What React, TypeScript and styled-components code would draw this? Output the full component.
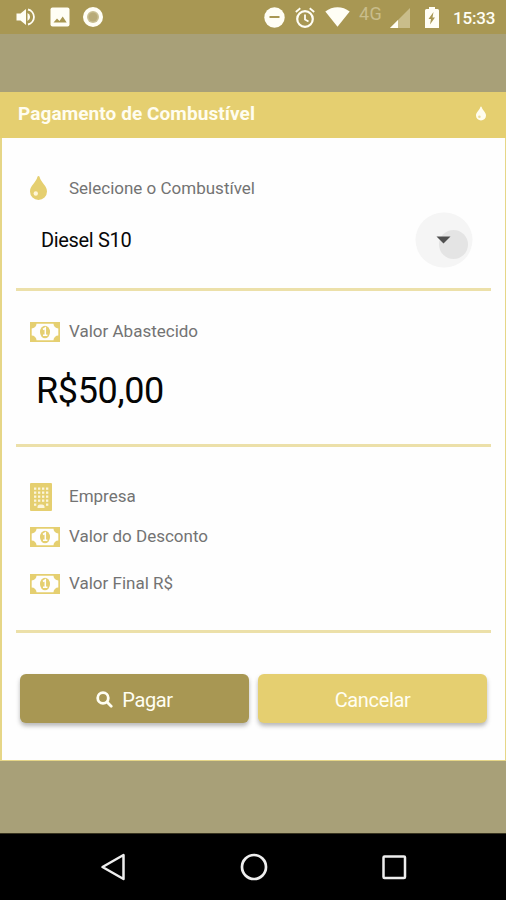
import React from "react";
import styled, { createGlobalStyle } from "styled-components";

const GlobalStyle = createGlobalStyle`
  * { box-sizing: border-box; }
  body { margin: 0; background: #a8a078; font-family: Roboto, "Liberation Sans", sans-serif; }
  svg { display: block; flex: none; }
`;

const gold = "#e5cf70";
const olive = "#a89753";

const Screen = styled.div`
  width: 506px;
  height: 900px;
  display: flex;
  flex-direction: column;
  background: #a8a078;
  overflow: hidden;
`;

const StatusBar = styled.header`
  height: 34px;
  flex: none;
  display: flex;
  align-items: center;
  justify-content: space-between;
  padding: 0 10px 0 16px;
  background: ${olive};
  color: #fffef5;
`;

const StatusGroup = styled.div`
  display: flex;
  align-items: center;
`;

const Gap = styled.span<{ $w: number }>`
  flex: none;
  width: ${(p) => p.$w}px;
`;

const Network = styled.span`
  width: 25px;
  height: 26px;
  font-size: 18px;
  line-height: 19px;
  letter-spacing: 0.5px;
  color: #c9bd8b;
`;

const Clock = styled.span`
  width: 43px;
  font-size: 17px;
  line-height: 34px;
  font-weight: 500;
  letter-spacing: -0.2px;
  white-space: nowrap;
  padding-top: 2px;
`;

const Dialog = styled.main`
  margin-top: 58px;
  height: 669px;
  flex: none;
  background: #fefefe;
  border: solid #e6d687;
  border-width: 0 1px 1px 2px;
`;

const DialogHeader = styled.div`
  height: 46px;
  margin: 0 -1px 0 -2px;
  padding: 0 20px 3px 18px;
  display: flex;
  align-items: center;
  justify-content: space-between;
  background: ${gold};
  color: #fffdf0;
`;

const Title = styled.h1`
  margin: 0;
  font-size: 19px;
  line-height: 24px;
  font-weight: 700;
  letter-spacing: 0.08px;
`;

const Section = styled.section<{ $h: number; $top: number }>`
  height: ${(p) => p.$h}px;
  margin: 0 14px;
  padding: ${(p) => p.$top}px 0 0 14px;
  border-bottom: 3px solid #ece0a9;
`;

const Row = styled.div<{ $h: number }>`
  height: ${(p) => p.$h}px;
  display: flex;
  align-items: center;
`;

const IconSlot = styled.span`
  width: 39px;
  flex: none;
  color: ${gold};
`;

const Label = styled.span<{ $lift?: number }>`
  font-size: 17px;
  line-height: 24px;
  padding-bottom: ${(p) => (p.$lift ?? 0) * 2}px;
  color: #737373;
`;

const Select = styled.div`
  height: 56px;
  margin-top: 12px;
  padding: 0 18px 0 11px;
  display: flex;
  align-items: center;
  justify-content: space-between;
  font-size: 20px;
  letter-spacing: -0.33px;
  color: #080808;
`;

const Amount = styled.div`
  margin-top: 19px;
  padding-left: 6px;
  height: 56px;
  font-size: 36px;
  line-height: 56px;
  letter-spacing: -0.35px;
  color: #050505;
`;

const Actions = styled.div`
  display: flex;
  gap: 9px;
  padding: 41px 18px 0 18px;
`;

const Button = styled.button<{ $primary?: boolean }>`
  flex: 1;
  height: 49px;
  display: flex;
  align-items: center;
  justify-content: center;
  gap: 9px;
  padding: 2px 0 0;
  border: 0;
  border-radius: 6px;
  background: ${(p) => (p.$primary ? olive : gold)};
  box-shadow: 0 3px 4px rgba(60, 60, 60, 0.36);
  color: #fffef2;
  font: 400 20px Roboto, sans-serif;
  letter-spacing: -0.35px;
`;

const NavBar = styled.nav`
  height: 67px;
  margin-top: auto;
  flex: none;
  display: flex;
  align-items: center;
  justify-content: space-between;
  padding: 0 99px 0 100px;
  background: #000;
  border-top: 1px solid #37331f;
`;

const Drop = ({ w, h, hole }: { w: number; h: number; hole: string }) => (
  <svg width={w} height={h} viewBox="0 0 17 24" fill="currentColor">
    <path d="M8.5 0c.6 0 .9.4 1.1 1.1C11 6.6 17 9.8 17 15.5A8.5 8.5 0 0 1 0 15.5C0 9.8 6 6.6 7.4 1.1 7.6.4 7.900 0 8.500 0Z" />
    <circle cx="5.8" cy="17.5" r="2.2" fill={hole} />
  </svg>
);

const Money = () => (
  <svg width="30" height="20" viewBox="0 0 30 20">
    <path fill="currentColor" d="M0 0h30v20H0z" />
    <path fill="#fefefe" d="M6.5 1.700h17a4.800 4.800 0 0 0 4.800 4.800v7a4.800 4.800 0 0 0-4.800 4.800h-17a4.800 4.800 0 0 0-4.800-4.800v-7A4.800 4.800 0 0 0 6.500 1.700Z" />
    <ellipse cx="15" cy="10" rx="5" ry="6.300" fill="currentColor" />
    <path d="M13 7.500 15.300 6V13M13 13.300h4.400" fill="none" stroke="#fefefe" strokeWidth="1.500" />
  </svg>
);

const Building = () => (
  <svg width="22" height="28" viewBox="0 0 22 28">
    <rect width="22" height="28" rx="1" fill="currentColor" />
    <g fill="#fbf5dc">
      {[4, 8, 12, 16].map((x) =>
        [4.500, 8.500, 12.500, 16.500, 20.500].map((y, i) =>
          i > 3 && x > 5 && x < 15 ? null : <rect key={`${x}-${y}`} x={x} y={y} width="2.300" height="2.300" />
        )
      )}
      <path d="M7.500 25v-1a2.500 2.500 0 0 1 2.500-2.500h2a2.500 2.500 0 0 1 2.500 2.500v1Z" />
    </g>
  </svg>
);

const Dropdown = () => (
  <svg width="58" height="56" viewBox="0 0 58 56">
    <ellipse cx="29" cy="28" rx="28.5" ry="27.5" fill="#f5f5f5" />
    <circle cx="38.5" cy="32.5" r="14.5" fill="#e4e4e4" />
    <path d="M21.5 24.500h14l-7 7Z" fill="#505050" />
  </svg>
);

const Search = () => (
  <svg width="17" height="17" viewBox="0 0 17 17" fill="none" stroke="currentColor" strokeWidth="2.8">
    <circle cx="7" cy="7" r="5.3" />
    <path d="m11 11 4.200 4.200" strokeLinecap="round" />
  </svg>
);

const Speaker = () => (
  <svg width="20" height="18" viewBox="0 0 20 18">
    <path fill="currentColor" d="M.5 5.500h4L10 1v16l-5.500-4.500h-4Z" />
    <path fill="currentColor" d="M11.500 5a4.400 4.400 0 0 1 0 8Z" />
    <path d="M12 1.500a7.700 7.700 0 0 1 0 15" fill="none" stroke="currentColor" strokeWidth="1.800" />
  </svg>
);

const Picture = () => (
  <svg width="20" height="20" viewBox="0 0 20 20">
    <rect x=".5" y=".5" width="19" height="19" rx="2" fill="currentColor" />
    <path d="m3.500 15.500 3.500-4 2.500 2.500 3.200-4.500 4 6Z" fill={olive} />
  </svg>
);

const Record = () => (
  <svg width="20" height="20" viewBox="0 0 20 20">
    <circle cx="10" cy="10" r="10" fill="currentColor" />
    <circle cx="10" cy="10" r="6" fill="#c9bf94" />
    <circle cx="10" cy="10" r="4.500" fill="#b8ab78" />
  </svg>
);

const DoNotDisturb = () => (
  <svg width="21" height="21" viewBox="0 0 21 21">
    <circle cx="10.500" cy="10.500" r="10.200" fill="currentColor" />
    <path d="M5.500 10h10" stroke={olive} strokeWidth="2" />
  </svg>
);

const Alarm = () => (
  <svg width="20" height="21" viewBox="0 0 20 21" fill="none" stroke="currentColor" strokeWidth="2.200">
    <circle cx="10" cy="12" r="7.800" />
    <path d="M10 7.500v5l3.500 2M.8 5 5.300 1.300M19.200 5l-4.500-3.700" strokeWidth="1.800" />
  </svg>
);

const Wifi = () => (
  <svg width="25" height="20" viewBox="0 0 25 20" fill="currentColor">
    <path d="M.3 4.500C7.500-1.200 17.500-1.200 24.700 4.500L12.500 19.800Z" />
  </svg>
);

const Signal = () => (
  <svg width="20" height="22" viewBox="0 0 20 22">
    <path d="M0 22 20 2v20Z" fill="#c9bd8b" />
    <path d="M0 22 8 14v8Z" fill="currentColor" />
  </svg>
);

const Battery = () => (
  <svg width="14" height="21" viewBox="0 0 14 21">
    <path fill="currentColor" d="M4 0h6v2h2.500A1.500 1.500 0 0 1 14 3.500V21H0V3.500A1.500 1.500 0 0 1 1.500 2H4Z" />
    <path fill={olive} d="M8.500 5 3.500 12H6l-1 5.500 5-7H7.500Z" />
  </svg>
);

export default function App() {
  return (
    <>
      <GlobalStyle />
      <Screen>
        <StatusBar>
          <StatusGroup>
            <Speaker />
            <Gap $w={14} />
            <Picture />
            <Gap $w={13} />
            <Record />
          </StatusGroup>
          <StatusGroup>
            <DoNotDisturb />
            <Gap $w={10} />
            <Alarm />
            <Gap $w={10} />
            <Wifi />
            <Gap $w={9} />
            <Network>4G</Network>
            <Gap $w={6} />
            <Signal />
            <Gap $w={15} />
            <Battery />
            <Gap $w={14} />
            <Clock>15:33</Clock>
          </StatusGroup>
        </StatusBar>

        <Dialog>
          <DialogHeader>
            <Title>Pagamento de Combustível</Title>
            <Drop w={10} h={15} hole="#eedf9d" />
          </DialogHeader>

          <Section $h={153} $top={38}>
            <Row $h={24}>
              <IconSlot><Drop w={17} h={24} hole="#fff6d8" /></IconSlot>
              <Label>Selecione o Combustível</Label>
            </Row>
            <Select>
              Diesel S10
              <Dropdown />
            </Select>
          </Section>

          <Section $h={156} $top={29}>
            <Row $h={24}>
              <IconSlot><Money /></IconSlot>
              <Label $lift={1}>Valor Abastecido</Label>
            </Row>
            <Amount>R$50,00</Amount>
          </Section>

          <Section $h={186} $top={34}>
            <Row $h={32}>
              <IconSlot><Building /></IconSlot>
              <Label $lift={1}>Empresa</Label>
            </Row>
            <Row $h={48}>
              <IconSlot><Money /></IconSlot>
              <Label $lift={1}>Valor do Desconto</Label>
            </Row>
            <Row $h={46}>
              <IconSlot><Money /></IconSlot>
              <Label $lift={1}>Valor Final R$</Label>
            </Row>
          </Section>

          <Actions>
            <Button $primary>
              <Search />
              Pagar
            </Button>
            <Button>Cancelar</Button>
          </Actions>
        </Dialog>

        <NavBar>
          <svg width="26" height="28" viewBox="0 0 26 28" fill="none" stroke="#eee" strokeWidth="2.500" strokeLinejoin="round">
            <path d="M2.500 14 23.500 2v24Z" />
          </svg>
          <svg width="28" height="28" viewBox="0 0 28 28" fill="none" stroke="#eee" strokeWidth="2.700">
            <circle cx="14" cy="14" r="12" />
          </svg>
          <svg width="26" height="26" viewBox="0 0 26 26" fill="none" stroke="#eee" strokeWidth="2.500">
            <rect x="2.500" y="2.500" width="21.500" height="21.500" rx="1" />
          </svg>
        </NavBar>
      </Screen>
    </>
  );
}
